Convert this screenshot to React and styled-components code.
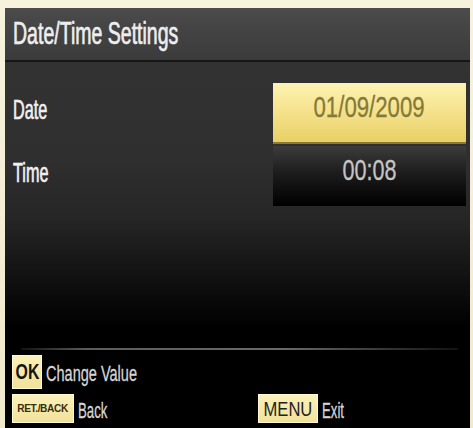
import React from "react";
import styled, { createGlobalStyle } from "styled-components";

const GlobalStyle = createGlobalStyle`
  html, body {
    margin: 0;
    padding: 0;
    background: #f4efd6;
  }
  body {
    font-family: "Liberation Sans", Arial, sans-serif;
  }
`;

const Screen = styled.div`
  width: 473px;
  height: 428px;
  box-sizing: border-box;
  padding: 8px 3px 0 5px;
  background: linear-gradient(180deg, #f7f2dc 0%, #efeacc 100%);
  overflow: hidden;
`;

const Panel = styled.div`
  height: 420px;
  display: flex;
  flex-direction: column;
  background: linear-gradient(
    180deg,
    #343434 0px,
    #2f2f2f 150px,
    #262626 210px,
    #0a0a0a 290px,
    #000 320px
  );
`;

const Header = styled.header`
  height: 54px;
  display: flex;
  align-items: center;
  padding: 0 0 2px 8px;
  box-sizing: border-box;
  background: linear-gradient(180deg, #4b4b4b 0%, #414141 60%, #3b3b3b 100%);
  border-bottom: 2px solid #161616;
`;

// the TV menu font is very narrow, squeeze Arial to match
const Squeeze = styled.span`
  display: inline-block;
  white-space: nowrap;
  line-height: 1;
  transform: scaleX(${(p) => p.$x || 0.62});
  transform-origin: ${(p) => (p.$center ? "center" : "left")} center;
`;

const Title = styled(Squeeze)`
  font-size: 31px;
  color: #ededed;
  -webkit-text-stroke: 0.5px #ededed;
  text-shadow: 0 0 1px rgba(255, 255, 255, 0.4);
`;

const Body = styled.div`
  padding-top: 21px;
  display: flex;
  flex-direction: column;
  gap: 2px;
`;

const Row = styled.div`
  height: ${(p) => p.$h}px;
  display: flex;
  align-items: center;
  justify-content: space-between;
  padding: 0 4px 0 8px;
`;

const Label = styled(Squeeze)`
  font-size: 28px;
  color: #efefef;
  margin-bottom: 7px;
  -webkit-text-stroke: 0.5px #efefef;
  text-shadow: 0 0 1px rgba(255, 255, 255, 0.4);
`;

const ValueBox = styled.div`
  width: 193px;
  height: 100%;
  box-sizing: border-box;
  display: flex;
  align-items: center;
  justify-content: center;
  padding-bottom: ${(p) => (p.$selected ? 11 : 13)}px;
  background: ${(p) =>
    p.$selected
      ? "linear-gradient(180deg, #fcf3b4 0%, #f5e38e 45%, #e8cf66 100%)"
      : "linear-gradient(180deg, #3c3c3c 0%, #1c1c1c 45%, #000 100%)"};
  border-bottom: ${(p) => (p.$selected ? "2px solid #8c7a33" : "none")};
`;

const Value = styled(Squeeze)`
  font-size: 30px;
  color: ${(p) => (p.$selected ? "#85793a" : "#c4c4c4")};
  -webkit-text-stroke: 0.3px ${(p) => (p.$selected ? "#85793a" : "#c4c4c4")};
`;

const Spacer = styled.div`
  flex: 1;
`;

const Divider = styled.div`
  height: 2px;
  margin: 0 12px 0 16px;
  background: linear-gradient(
    90deg,
    rgba(90, 90, 90, 0.2) 0%,
    #5c5c5c 15%,
    #6a6a6a 60%,
    rgba(90, 90, 90, 0.2) 100%
  );
`;

const Footer = styled.footer`
  padding: 5px 0 5px 7px;
  display: flex;
  flex-direction: column;
  gap: 5px;
`;

const HintRow = styled.div`
  display: flex;
  align-items: center;
  height: ${(p) => p.$h}px;
`;

const Hint = styled.div`
  display: flex;
  align-items: center;
  height: 100%;
  width: ${(p) => (p.$w ? `${p.$w}px` : "auto")};
`;

const Key = styled.div`
  width: ${(p) => p.$w}px;
  height: 100%;
  box-sizing: border-box;
  display: flex;
  align-items: center;
  justify-content: center;
  overflow: hidden;
  background: linear-gradient(180deg, #fbf1b8 0%, #f1e29a 100%);
  border: 1px solid #fff8d0;
  color: #1a1a1a;
  margin-right: 4px;
`;

const KeyText = styled(Squeeze)`
  font-size: ${(p) => p.$size}px;
  font-weight: ${(p) => (p.$bold ? 700 : 400)};
  letter-spacing: ${(p) => (p.$tight ? "-0.4px" : "0")};
  color: ${(p) => p.$color || "#141414"};
`;

const HintText = styled(Squeeze)`
  font-size: 22px;
  color: #d6d6d6;
  margin-top: 4px;
  -webkit-text-stroke: 0.3px #d6d6d6;
`;

const rows = [
  { label: "Date", value: "01/09/2009", h: 61, selected: true, sx: 0.74 },
  { label: "Time", value: "00:08", h: 60, selected: false, sx: 0.72 },
];

export default function App() {
  return (
    <>
      <GlobalStyle />
      <Screen>
        <Panel>
          <Header>
            <Title $x={0.63}>Date/Time Settings</Title>
          </Header>
          <Body>
            {rows.map((r) => (
              <Row key={r.label} $h={r.h}>
                <Label $x={0.58}>{r.label}</Label>
                <ValueBox $selected={r.selected}>
                  <Value $center $x={r.sx} $selected={r.selected}>
                    {r.value}
                  </Value>
                </ValueBox>
              </Row>
            ))}
          </Body>
          <Spacer />
          <Divider />
          <Footer>
            <HintRow $h={34}>
              <Hint>
                <Key $w={30}>
                  <KeyText $center $x={0.72} $size={22} $bold>
                    OK
                  </KeyText>
                </Key>
                <HintText $x={0.66}>Change Value</HintText>
              </Hint>
            </HintRow>
            <HintRow $h={29}>
              <Hint $w={246}>
                <Key $w={62}>
                  <KeyText $center $x={0.92} $size={11} $bold $tight $color="#3a2e10">
                    RET./BACK
                  </KeyText>
                </Key>
                <HintText $x={0.6}>Back</HintText>
              </Hint>
              <Hint>
                <Key $w={60}>
                  <KeyText $center $x={0.79} $size={21} $color="#222">
                    MENU
                  </KeyText>
                </Key>
                <HintText $x={0.6}>Exit</HintText>
              </Hint>
            </HintRow>
          </Footer>
        </Panel>
      </Screen>
    </>
  );
}
